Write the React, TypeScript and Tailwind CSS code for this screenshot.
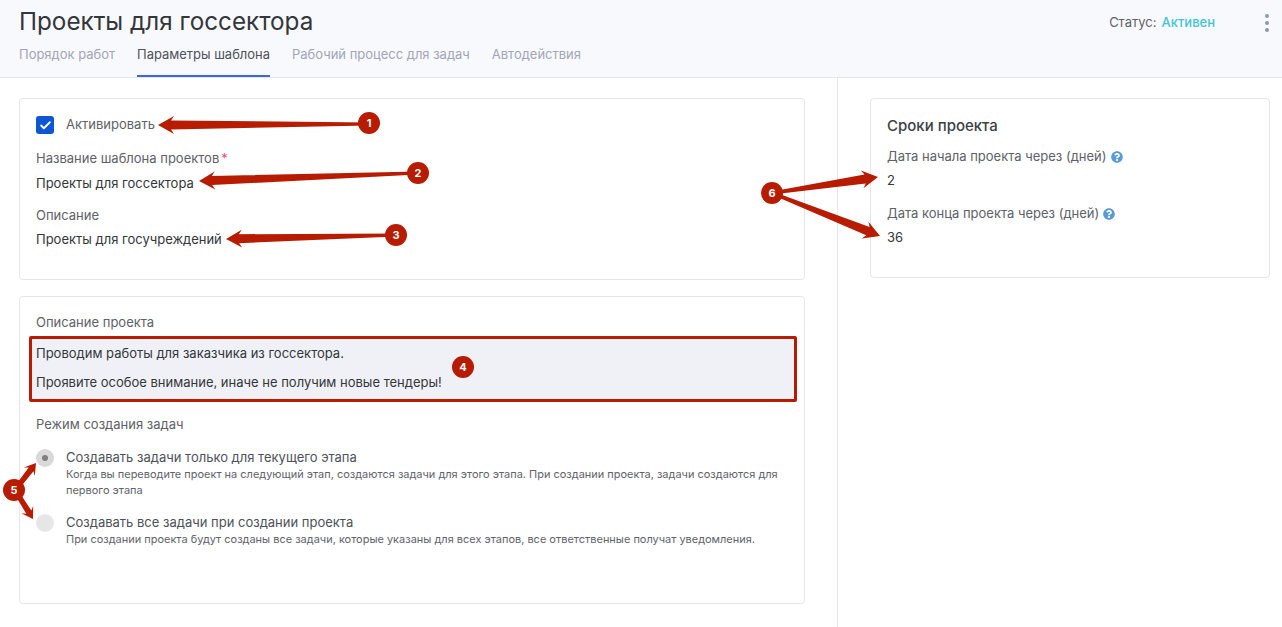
import { Check } from 'lucide-react';
import { FaQuestionCircle } from 'react-icons/fa';

const RED = '#b71c00';

// annotation arrow: thin tail at the badge, growing toward the head
function arrowPoints(x1: number, y1: number, x2: number, y2: number, head = 13, headW = 9, tail = 1.5, neck = 4.5) {
  const len = Math.hypot(x2 - x1, y2 - y1);
  const ux = (x2 - x1) / len;
  const uy = (y2 - y1) / len;
  const nx = -uy;
  const ny = ux;
  const bx = x2 - ux * head;
  const by = y2 - uy * head;
  const nb = (px: number, py: number, w: number) => `${px + nx * w},${py + ny * w}`;
  return [
    nb(x1, y1, tail),
    nb(bx, by, neck),
    nb(bx - ux * 3, by - uy * 3, headW),
    `${x2},${y2}`,
    nb(bx - ux * 3, by - uy * 3, -headW),
    nb(bx, by, -neck),
    nb(x1, y1, -tail),
  ].join(' ');
}

const arrows = [
  [369, 124, 158, 125],
  [418, 173, 199, 181],
  [396, 235, 226, 239],
  [772, 193, 878, 177],
  [772, 193, 880, 236],
];

const shortArrows = [
  [15, 490, 36, 463],
  [15, 490, 33, 519],
];

function Badge({ n, className }: { n: number; className: string }) {
  return (
    <div className={`absolute w-[22px] h-[22px] rounded-full bg-[#b71c00] text-white text-[11px] font-bold flex items-center justify-center ${className}`}>
      {n}
    </div>
  );
}

function RadioRow({ selected, title, hint }: { selected?: boolean; title: string; hint: string }) {
  return (
    <div className="flex items-start gap-[12px]">
      <div className={`w-[18px] h-[18px] mt-[1px] rounded-full flex items-center justify-center shrink-0 ${selected ? 'bg-[#d9d9d9]' : 'bg-[#e6e6e6]'}`}>
        {selected && <div className="w-[6px] h-[6px] rounded-full bg-[#7f7f7f]" />}
      </div>
      <div>
        <div className="text-[13px] leading-[18px] text-[#4d5159]">{title}</div>
        <div className="text-[10.97px] leading-[16px] text-[#5f636b]">{hint}</div>
      </div>
    </div>
  );
}

export default function App() {
  return (
    <div className="relative w-[1282px] h-[627px] overflow-hidden bg-white font-['Inter',sans-serif] text-[13px] text-[#33363b]">
      {/* Header */}
      <div className="h-[78px] bg-[#f8f9fd] border-b border-[#e4e6ef] px-[19px] flex justify-between">
        <div>
          <h1 className="text-[24.25px] leading-[29px] pt-[7px] box-content font-normal text-[#33363b]">Проекты для госсектора</h1>
          <div className="flex gap-[22px] text-[12.97px] text-[#a1a5b7]">
            <div className="h-[41px] pt-[9px]">Порядок работ</div>
            <div className="h-[41px] pt-[9px] text-[#4d5159] border-b-2 border-[#3b67e0]">Параметры шаблона</div>
            <div className="h-[41px] pt-[9px]">Рабочий процесс для задач</div>
            <div className="h-[41px] pt-[9px]">Автодействия</div>
          </div>
        </div>
        <div className="flex items-start pt-[14px]">
          <div className="text-[13px] leading-[17px] text-[#5e6168]">Статус:</div>
          <div className="text-[13px] leading-[17px] ml-[5px] text-[#3fc5d8] font-medium">Активен</div>
          <div className="ml-[50px] mr-[-6px] flex flex-col gap-[3px]">
            <div className="w-[4px] h-[4px] rounded-full bg-[#8a97b5]" />
            <div className="w-[4px] h-[4px] rounded-full bg-[#8a97b5]" />
            <div className="w-[4px] h-[4px] rounded-full bg-[#8a97b5]" />
          </div>
        </div>
      </div>

      <div className="flex h-[549px]">
        {/* Left column */}
        <div className="w-[838px] shrink-0 border-r border-[#e4e6ef] pl-[19px] pr-[32px] pt-[20px]">
          <div className="h-[182px] border border-[#e4e6ef] rounded-[4px] px-[16px] pt-[17px]">
            <div className="flex items-center gap-[12px] h-[18px]">
              <div className="w-[18px] h-[18px] rounded-[3px] bg-[#0d56d4] flex items-center justify-center">
                <Check size={13} strokeWidth={3.5} className="text-white" />
              </div>
              <span className="text-[#5e6168]">Активировать</span>
            </div>
            <div className="mt-[16px] text-[#5e6168] leading-[17px]">
              Название шаблона проектов<span className="text-[#ef4f6b] ml-[2px]">*</span>
            </div>
            <div className="mt-[8px] leading-[17px]">Проекты для госсектора</div>
            <div className="mt-[15px] text-[#5e6168] leading-[17px]">Описание</div>
            <div className="mt-[7px] leading-[17px]">Проекты для госучреждений</div>
          </div>

          <div className="h-[308px] mt-[16px] border border-[#e4e6ef] rounded-[4px] px-[16px] pt-[17px]">
            <div className="text-[#5e6168] leading-[17px]">Описание проекта</div>
            <div className="-ml-[7px] -mr-[9px] mt-[5px] h-[66px] bg-[#f0f1f7] border-[3px] border-[#b71c00] rounded-[2px] pl-[4px] pt-[6px]">
              <div className="leading-[17px]">Проводим работы для заказчика из госсектора.</div>
              <div className="leading-[17px] mt-[12px]">Проявите особое внимание, иначе не получим новые тендеры!</div>
            </div>
            <div className="mt-[14px] text-[#5e6168] leading-[17px]">Режим создания задач</div>
            <div className="mt-[15px] flex flex-col gap-[15px]">
              <RadioRow
                selected
                title="Создавать задачи только для текущего этапа"
                hint="Когда вы переводите проект на следующий этап, создаются задачи для этого этапа. При создании проекта, задачи создаются для первого этапа"
              />
              <RadioRow
                title="Создавать все задачи при создании проекта"
                hint="При создании проекта будут созданы все задачи, которые указаны для всех этапов, все ответственные получат уведомления."
              />
            </div>
          </div>
        </div>

        {/* Right column */}
        <div className="pl-[32px] pt-[20px]">
          <div className="w-[400px] h-[180px] border border-[#e4e6ef] rounded-[4px] px-[16px] pt-[18px]">
            <h2 className="text-[15px] leading-[18px] font-medium text-[#3c3f45]">Сроки проекта</h2>
            <div className="mt-[13px] flex items-center gap-[4px] leading-[17px] text-[#5e6168]">
              Дата начала проекта через (дней)
              <FaQuestionCircle size={12} className="text-[#5b9bd5]" />
            </div>
            <div className="mt-[7px] leading-[17px]">2</div>
            <div className="mt-[16px] flex items-center gap-[4px] leading-[17px] text-[#5e6168]">
              Дата конца проекта через (дней)
              <FaQuestionCircle size={12} className="text-[#5b9bd5]" />
            </div>
            <div className="mt-[7px] leading-[17px]">36</div>
          </div>
        </div>
      </div>

      {/* Annotations drawn over the screenshot */}
      <svg className="absolute inset-0 pointer-events-none" width={1282} height={627}>
        {arrows.map((a, i) => (
          <polygon key={i} points={arrowPoints(a[0], a[1], a[2], a[3])} fill={RED} />
        ))}
        {shortArrows.map((a, i) => (
          <polygon key={i} points={arrowPoints(a[0], a[1], a[2], a[3], 8, 7, 2.5, 3)} fill={RED} />
        ))}
      </svg>
      <Badge n={1} className="left-[358px] top-[112px]" />
      <Badge n={2} className="left-[407px] top-[162px]" />
      <Badge n={3} className="left-[385px] top-[224px]" />
      <Badge n={4} className="left-[452px] top-[356px]" />
      <Badge n={5} className="left-[3px] top-[479px]" />
      <Badge n={6} className="left-[761px] top-[182px]" />
    </div>
  );
}
